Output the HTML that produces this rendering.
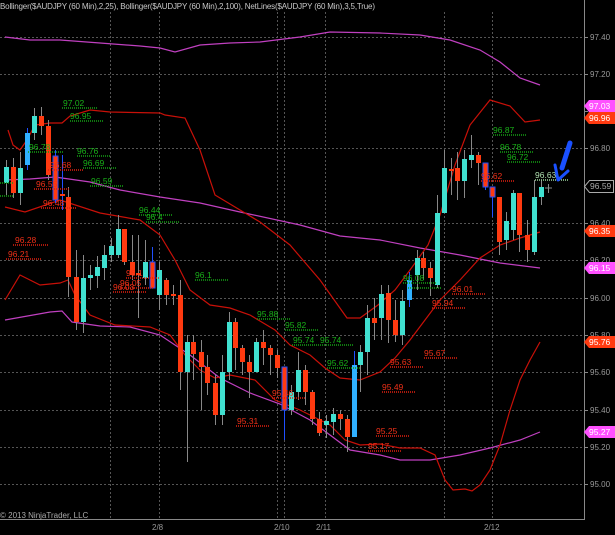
<!DOCTYPE html>
<html><head><meta charset="utf-8"><style>
html,body{margin:0;padding:0;background:#000;}
svg{display:block;font-family:"Liberation Sans",sans-serif;}
</style></head><body>
<svg width="615" height="535" viewBox="0 0 615 535" xmlns="http://www.w3.org/2000/svg">
<rect width="615" height="535" fill="#000"/>
<text x="0" y="9" font-size="8" fill="#c8c8c8" textLength="375">Bollinger($AUDJPY (60 Min),2,25), Bollinger($AUDJPY (60 Min),2,100), NetLines($AUDJPY (60 Min),3,5,True)</text>
<!-- grid -->
<g stroke="#555" stroke-width="1" stroke-dasharray="2,2" fill="none">
<path d="M0 37.5H584M0 74.5H584M0 148.5H584M0 223.5H584M0 260.5H584M0 298.5H584M0 335.5H584M0 372.5H584M0 410.5H584M0 447.5H584M0 484.5H584"/>
<path d="M110.5 12V519M159.5 12V519M277.5 12V519M284.5 12V519M325.5 12V519M444.5 12V519M492.5 12V519"/>
</g>
<!-- axes -->
<path d="M584.5 0V519.5H0" stroke="#888" fill="none"/>
<g stroke="#888"><path d="M584 37.5h4M584 74.5h4M584 111.5h4M584 148.5h4M584 223.5h4M584 260.5h4M584 298.5h4M584 335.5h4M584 372.5h4M584 410.5h4M584 447.5h4M584 484.5h4"/></g>
<g font-size="8" fill="#999">
<text x="590" y="40">97.40</text><text x="590" y="77">97.20</text><text x="590" y="151">96.80</text>
<text x="590" y="226">96.40</text><text x="590" y="263">96.20</text><text x="590" y="301">96.00</text>
<text x="590" y="338">95.80</text><text x="590" y="375">95.60</text><text x="590" y="413">95.40</text>
<text x="590" y="450">95.20</text><text x="590" y="487">95.00</text>
<text x="152" y="530">2/8</text><text x="274" y="530">2/10</text><text x="316" y="530">2/11</text><text x="484" y="530">2/12</text>
<text x="0" y="518" fill="#aaa">© 2013 NinjaTrader, LLC</text>
</g>
<!-- bands -->
<g fill="none" stroke-width="1.2">
<polyline stroke="#c040c0" points="5,37 30,40 60,40 100,43 140,46 160,48 175,52 200,45 230,43 260,42 300,37 330,32 380,33 420,35 450,40 480,50 500,62 520,78 540,85"/>
<polyline stroke="#c040c0" points="5,180 30,179 55,177 90,182 120,190 160,197 200,203 240,212 300,225 340,236 380,240 420,248 460,255 500,263 540,268"/>
<polyline stroke="#c040c0" points="5,320 50,312 62,311 72,322 100,326 130,327 160,335 190,355 220,378 250,393 280,404 310,420 330,435 350,450 380,455 400,460 430,460 460,455 490,448 520,440 540,432"/>
<polyline stroke="#c81008" points="8,130 13,145 20,150 27,140 35,125 50,123 62,123 70,116 90,110 110,112 160,113 165,115 185,118 200,150 215,195 240,210 260,222 290,245 320,280 347,318 360,318 378,305 395,290 410,270 428,245 440,215 455,165 470,125 490,100 510,106 525,122 540,120"/>
<polyline stroke="#c81008" points="5,207 25,212 60,200 100,213 140,220 160,235 175,260 190,290 210,305 230,308 250,315 275,330 290,345 310,355 325,368 340,378 360,380 380,372 395,358 410,340 425,320 440,300 460,280 480,258 500,245 520,238 540,232"/>
<polyline stroke="#c81008" points="5,300 20,275 40,285 60,283 68,280 75,295 90,315 115,325 150,327 170,335 185,355 200,370 215,378 230,375 255,380 275,400 300,410 320,420 330,425 345,440 360,445 380,444 400,448 420,448 435,455 445,480 453,490 465,489 472,491 480,485 490,470 500,445 510,410 520,380 530,360 540,342"/>
</g>
<!-- candles -->
<g id="c" stroke-width="1">
<!-- wicks -->
<g stroke="#888">
<path d="M6.5 160V195M13.5 158V198M20.5 152V205M34.5 108V140M41.5 107V135M48.5 120V180M68.5 187V297M76.5 250V330M83.5 255V333M90.5 265V290M97.5 256V288M104.5 245V280M111.5 238V262M118.5 215V258M124.5 229V265M132.5 235V280M138.5 235V318M145.5 240V285M159.5 262V310M166.5 278V305M173.5 285V305M180.5 280V390M187.5 335V462M193.5 335V380M201.5 340V410M207.5 355V395M215.5 375V425M222.5 355V425M229.5 312V380M235.5 318V370M242.5 345V375M249.5 355V398M256.5 338V372M263.5 330V365M270.5 345V375M277.5 350V378M291.5 385V415M298.5 352V400M305.5 365V405M312.5 390V425M319.5 412V436M326.5 415V438M333.5 408V435M340.5 410V430M347.5 415V452M360.5 345V392M367.5 305V375M374.5 298V340M381.5 285V340M388.5 285V343M395.5 300V342M402.5 290V345M417.5 250V290M423.5 252V280M430.5 262V296M437.5 195V288M444.5 150V213M451.5 158V195M457.5 152V200M464.5 150V198M471.5 135V168M478.5 152V185M499.5 197V255M506.5 212V250M513.5 190V240M519.5 193V252M527.5 220V262M534.5 180V255M541.5 180V205M548.5 184V193M545 188H552"/>
</g>
<g stroke="#2050ff"><path d="M27.5 128V170M55.5 150V203M62.5 155V210M152.5 247V288M284.5 367V440M354.5 351V437M409.5 272V307M485.5 163V190M492.5 187V217"/></g>
<!-- cyan -->
<g fill="#40e0d0">
<rect x="4" y="167" width="5" height="16"/><rect x="18" y="168" width="5" height="25"/><rect x="32" y="116" width="5" height="17"/>
<rect x="81" y="278" width="5" height="44"/><rect x="88" y="275" width="5" height="3"/><rect x="95" y="267" width="5" height="9"/>
<rect x="102" y="255" width="5" height="13"/><rect x="109" y="246" width="5" height="9"/><rect x="116" y="229" width="5" height="26"/>
<rect x="143" y="262" width="5" height="16"/><rect x="157" y="270" width="5" height="25"/><rect x="185" y="342" width="5" height="30"/>
<rect x="220" y="372" width="5" height="43"/><rect x="227" y="322" width="5" height="50"/><rect x="254" y="342" width="5" height="30"/>
<rect x="289" y="392" width="5" height="18"/><rect x="296" y="370" width="5" height="22"/><rect x="324" y="421" width="5" height="4"/>
<rect x="331" y="414" width="5" height="8"/><rect x="358" y="352" width="5" height="13"/><rect x="365" y="318" width="5" height="34"/>
<rect x="379" y="294" width="5" height="24"/><rect x="400" y="301" width="5" height="34"/><rect x="415" y="258" width="5" height="17"/>
<rect x="435" y="213" width="5" height="72"/><rect x="442" y="168" width="5" height="45"/><rect x="462" y="159" width="5" height="22"/>
<rect x="469" y="155" width="5" height="5"/><rect x="504" y="221" width="5" height="19"/><rect x="511" y="193" width="5" height="37"/>
<rect x="532" y="197" width="5" height="55"/><rect x="539" y="187" width="5" height="10"/>
</g>
<g fill="#30b0ff">
<rect x="25" y="133" width="5" height="32"/><rect x="352" y="365" width="5" height="72"/><rect x="407" y="280" width="5" height="20"/>
</g>
<!-- red -->
<g fill="#ff3a10">
<rect x="11" y="167" width="5" height="26"/><rect x="39" y="116" width="5" height="10"/><rect x="46" y="126" width="5" height="49"/>
<rect x="53" y="156" width="5" height="44" stroke="#2050ff"/><rect x="60" y="194" width="5" height="2"/>
<rect x="66" y="197" width="5" height="80"/><rect x="74" y="277" width="5" height="45"/><rect x="122" y="229" width="5" height="33"/>
<rect x="130" y="262" width="5" height="13"/><rect x="136" y="273" width="5" height="2"/><rect x="150" y="262" width="5" height="26" stroke="#2050ff"/>
<rect x="164" y="280" width="5" height="15"/><rect x="171" y="294" width="5" height="2"/><rect x="178" y="295" width="5" height="77"/>
<rect x="191" y="342" width="5" height="12"/><rect x="199" y="352" width="5" height="15"/><rect x="205" y="367" width="5" height="16"/>
<rect x="213" y="383" width="5" height="32"/><rect x="233" y="322" width="5" height="26"/><rect x="240" y="348" width="5" height="14"/>
<rect x="247" y="362" width="5" height="10"/><rect x="261" y="342" width="5" height="6"/><rect x="268" y="348" width="5" height="7"/>
<rect x="275" y="355" width="5" height="13"/><rect x="282" y="367" width="5" height="43" stroke="#2050ff"/><rect x="303" y="370" width="5" height="22"/>
<rect x="310" y="392" width="5" height="27"/><rect x="317" y="419" width="5" height="14"/><rect x="338" y="414" width="5" height="5"/>
<rect x="345" y="419" width="5" height="18"/><rect x="372" y="318" width="5" height="5"/><rect x="386" y="293" width="5" height="27"/>
<rect x="393" y="320" width="5" height="15"/><rect x="421" y="258" width="5" height="10"/><rect x="428" y="268" width="5" height="10"/>
<rect x="449" y="169" width="5" height="2"/><rect x="455" y="168" width="5" height="13"/><rect x="476" y="155" width="5" height="8"/>
<rect x="483" y="163" width="5" height="24" stroke="#2050ff"/><rect x="490" y="187" width="5" height="10" stroke="#2050ff"/>
<rect x="497" y="197" width="5" height="45"/><rect x="517" y="193" width="5" height="42"/><rect x="525" y="235" width="5" height="15"/>
</g>
</g>
<!-- netlines -->
<g stroke-dasharray="1,1" stroke-width="1.5" fill="none">
<path stroke="#14a014" d="M62 108H97M70 121H104M28 152H63M77 156H110M83 168H117M90 186H124M0 183H14M0 196H14M139 215H173M146 222H180M195 280H229M257 319H290M285 330H318M292 345H353M327 368H360M403 283H437M408 288H442M493 135H527M500 152H534M507 162H541"/>
<path stroke="#a0d8a0" d="M535 180H568"/>
<path stroke="#e02010" d="M48 170H83M34 189H69M41 208H76M13 245H48M6 259H41M126 278H160M120 288H154M113 292H147M272 398H306M236 426H270M376 436H410M368 451H402M390 367H424M382 392H416M424 358H458M432 308H466M452 294H486M481 181H515"/>
</g>
<g font-size="8.5">
<g fill="#18b018">
<text x="63" y="106">97.02</text><text x="70" y="119">96.95</text><text x="29" y="150">96.78</text><text x="77" y="154">96.76</text>
<text x="83" y="166">96.69</text><text x="91" y="184">96.59</text><text x="139" y="213">96.44</text><text x="146" y="220">96.4</text>
<text x="195" y="278">96.1</text><text x="257" y="317">95.88</text><text x="285" y="328">95.82</text><text x="293" y="343">95.74</text>
<text x="320" y="343">95.74</text><text x="327" y="366">95.62</text><text x="403" y="281">96.08</text>
<text x="493" y="133">96.87</text><text x="500" y="150">96.78</text><text x="507" y="160">96.72</text>
</g>
<text x="535" y="178" fill="#b0e0b0">96.63</text>
<g fill="#f03018">
<text x="50" y="168">96.68</text><text x="36" y="187">96.55</text><text x="43" y="206">96.48</text><text x="15" y="243">96.28</text>
<text x="8" y="257">96.21</text><text x="126" y="276">96.1</text><text x="120" y="286">96.05</text><text x="113" y="290">96.03</text>
<text x="272" y="396">95.46</text><text x="237" y="424">95.31</text><text x="376" y="434">95.25</text><text x="368" y="449">95.17</text>
<text x="390" y="365">95.63</text><text x="382" y="390">95.49</text><text x="424" y="356">95.67</text><text x="432" y="306">95.94</text>
<text x="452" y="292">96.01</text><text x="481" y="179">96.62</text>
</g>
</g>
<!-- axis tags -->
<g font-size="8.5">
<path d="M584 106l5-6h26v12h-26z" fill="#ff50ff"/><text x="589" y="109" fill="#fff">97.03</text>
<path d="M584 118l5-6h26v12h-26z" fill="#ff3a10"/><text x="589" y="121" fill="#fff">96.96</text>
<path d="M584.5 186.5l5-6h24v12h-24z" fill="#000" stroke="#aaa"/><text x="590" y="189" fill="#aaa">96.59</text>
<path d="M584 231l5-6h26v12h-26z" fill="#ff3a10"/><text x="589" y="234" fill="#fff">96.35</text>
<path d="M584 268l5-6h26v12h-26z" fill="#ff50ff"/><text x="589" y="271" fill="#fff">96.15</text>
<path d="M584 342l5-6h26v12h-26z" fill="#ff3a10"/><text x="589" y="345" fill="#fff">95.76</text>
<path d="M584 432l5-6h26v12h-26z" fill="#ff50ff"/><text x="589" y="435" fill="#fff">95.27</text>
</g>
<!-- arrow -->
<g fill="#1a50ff" stroke="#1a50ff">
<path d="M570 143 L562 168" stroke-width="5" stroke-linecap="round"/>
<path d="M555 165 L558 180 L568 171" stroke-width="3" stroke-linejoin="round" fill="none" stroke-linecap="round"/>
</g>
</svg>
</body></html>
